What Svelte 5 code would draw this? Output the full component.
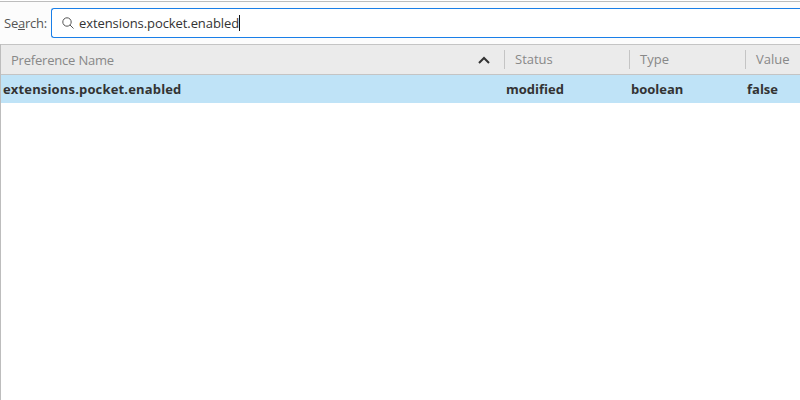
<script>
	const columns = [
		{ name: 'Status', value: 'modified', width: 125 },
		{ name: 'Type', value: 'boolean', width: 116 },
		{ name: 'Value', value: 'false', width: 55 }
	]
</script>

<div class="window">
	<div class="search-bar">
		<label for="search">Se<u>a</u>rch:</label>
		<div class="search-box">
			<svg width="14" height="14" viewBox="0 0 14 14" fill="none" stroke="#555" stroke-width="1">
				<circle cx="5" cy="5" r="4.2" />
				<path d="M8 8 L11.5 11.5" />
			</svg>
			<span class="query">extensions.pocket.enabled</span><span class="caret"></span>
		</div>
	</div>

	<div class="table">
		<div class="head">
			<div class="head-name">
				<span class="pref-title">Preference Name</span>
				<svg width="12" height="8" viewBox="0 0 12 8" fill="none" stroke="#333" stroke-width="2">
					<path d="M1 7 L6 2 L11 7" />
				</svg>
			</div>
			{#each columns as col}
				<div class="head-col" style="width: {col.width}px">{col.name}</div>
			{/each}
		</div>
		<div class="row">
			<div class="row-name">extensions.pocket.enabled</div>
			{#each columns as col}
				<div class="row-col" style="width: {col.width}px">{col.value}</div>
			{/each}
		</div>
	</div>
</div>

<style>
	:global(body) {
		background: #fff;
	}
	.window {
		height: 400px;
		box-sizing: border-box;
		font-family: 'Open Sans', sans-serif;
		font-size: 13px;
		color: #333;
		overflow: hidden;
		padding-top: 1px;
	}
	.search-bar {
		height: 43px;
		box-sizing: border-box;
		border-top: 1px solid #bdbdbd;
		background: #fcfcfc;
		display: flex;
		align-items: flex-start;
		padding: 6px 0 0 4px;
		gap: 3px;
	}
	label {
		font-size: 13px;
		letter-spacing: -0.25px;
		color: #555;
		line-height: 30px;
		width: 44px;
	}
	.search-box {
		flex: 1;
		height: 30px;
		box-sizing: border-box;
		background: #fff;
		border: 1px solid #1a7fe8;
		border-right: none;
		border-radius: 3px 0 0 3px;
		display: flex;
		align-items: center;
		padding-left: 10px;
	}
	.search-box svg {
		margin-top: 1px;
	}
	.query {
		margin-left: 3px;
		color: #333;
		line-height: 28px;
		letter-spacing: -0.08px;
	}
	.caret {
		width: 1px;
		height: 16px;
		background: #111;
	}
	.table {
		border-left: 1px solid #bdbdbd;
		height: 356px;
	}
	.head {
		height: 31px;
		box-sizing: border-box;
		background: #ebebeb;
		border-top: 1px solid #c4c4c4;
		border-bottom: 1px solid #c4c4c4;
		display: flex;
		align-items: center;
		color: #888;
	}
	.head-name {
		flex: 1;
		display: flex;
		align-items: center;
		justify-content: space-between;
		padding: 0 14px 0 10px;
	}
	.pref-title {
		letter-spacing: -0.2px;
	}
	.head-col {
		box-sizing: border-box;
		height: 19px;
		line-height: 19px;
		border-left: 1px solid #c4c4c4;
		padding-left: 10px;
	}
	.row {
		height: 28px;
		background: #bfe3f7;
		display: flex;
		align-items: center;
		font-weight: 700;
		color: #333;
	}
	.row-name {
		flex: 1;
		padding-left: 2px;
		letter-spacing: 0.16px;
	}
	.row-col {
		box-sizing: border-box;
		padding-left: 2px;
	}
</style>
